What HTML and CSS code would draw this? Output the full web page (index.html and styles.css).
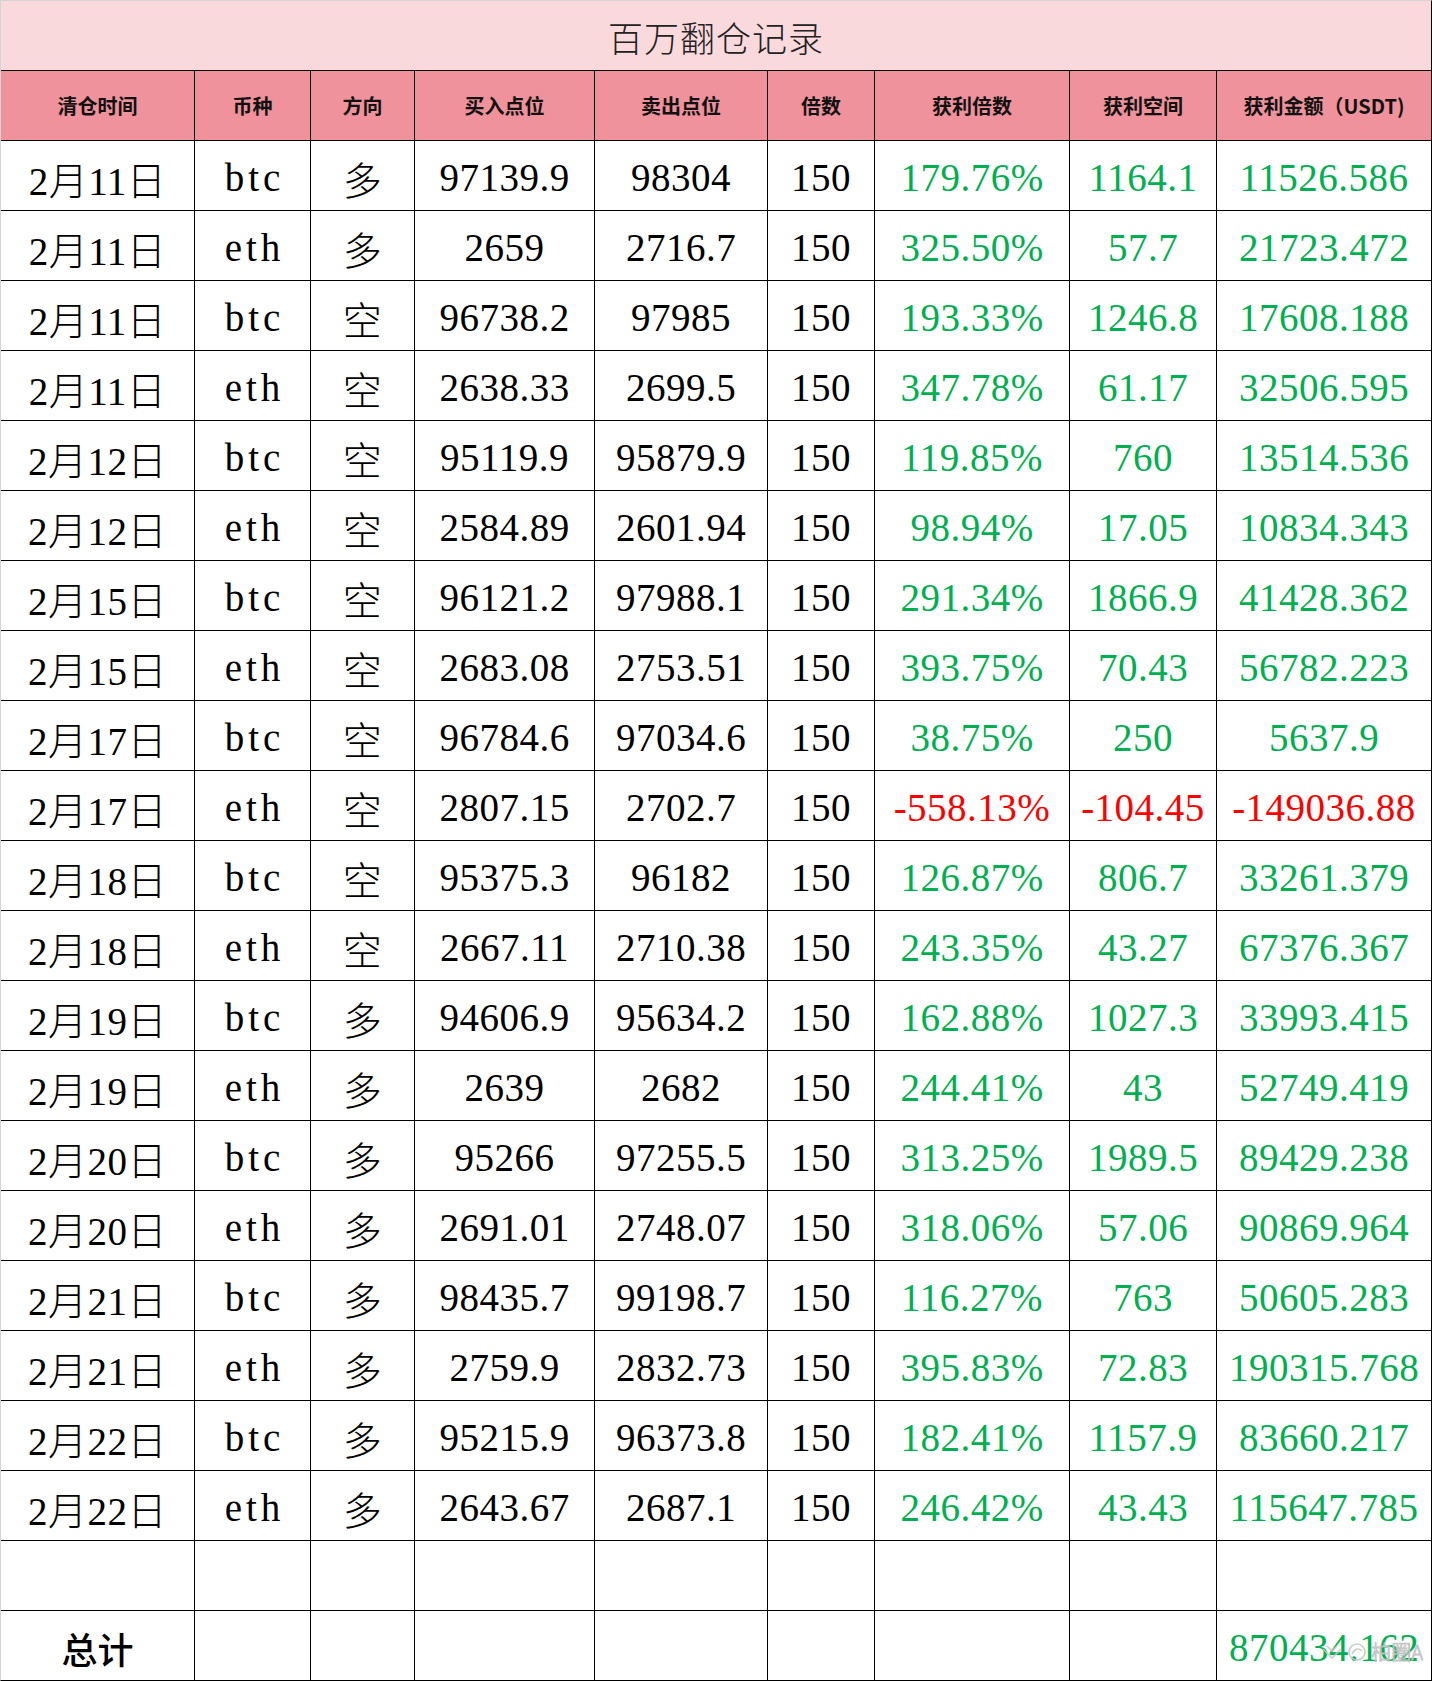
FILE: index.html
```html
<!DOCTYPE html>
<html lang="zh-CN">
<head>
<meta charset="utf-8">
<title>百万翻仓记录</title>
<link rel="stylesheet" href="styles.css">
</head>
<body>
<div class="sheet">
  <div class="title">百万翻仓记录</div>

  <div class="hd">清仓时间</div><div class="hd">币种</div><div class="hd">方向</div><div class="hd">买入点位</div><div class="hd">卖出点位</div><div class="hd">倍数</div><div class="hd">获利倍数</div><div class="hd">获利空间</div><div class="hd">获利金额（USDT)</div>

  <div class="c">2月11日</div><div class="c coin">btc</div><div class="c">多</div><div class="c">97139.9</div><div class="c">98304</div><div class="c">150</div><div class="c g">179.76%</div><div class="c g">1164.1</div><div class="c g">11526.586</div>
  <div class="c">2月11日</div><div class="c coin">eth</div><div class="c">多</div><div class="c">2659</div><div class="c">2716.7</div><div class="c">150</div><div class="c g">325.50%</div><div class="c g">57.7</div><div class="c g">21723.472</div>
  <div class="c">2月11日</div><div class="c coin">btc</div><div class="c">空</div><div class="c">96738.2</div><div class="c">97985</div><div class="c">150</div><div class="c g">193.33%</div><div class="c g">1246.8</div><div class="c g">17608.188</div>
  <div class="c">2月11日</div><div class="c coin">eth</div><div class="c">空</div><div class="c">2638.33</div><div class="c">2699.5</div><div class="c">150</div><div class="c g">347.78%</div><div class="c g">61.17</div><div class="c g">32506.595</div>
  <div class="c">2月12日</div><div class="c coin">btc</div><div class="c">空</div><div class="c">95119.9</div><div class="c">95879.9</div><div class="c">150</div><div class="c g">119.85%</div><div class="c g">760</div><div class="c g">13514.536</div>
  <div class="c">2月12日</div><div class="c coin">eth</div><div class="c">空</div><div class="c">2584.89</div><div class="c">2601.94</div><div class="c">150</div><div class="c g">98.94%</div><div class="c g">17.05</div><div class="c g">10834.343</div>
  <div class="c">2月15日</div><div class="c coin">btc</div><div class="c">空</div><div class="c">96121.2</div><div class="c">97988.1</div><div class="c">150</div><div class="c g">291.34%</div><div class="c g">1866.9</div><div class="c g">41428.362</div>
  <div class="c">2月15日</div><div class="c coin">eth</div><div class="c">空</div><div class="c">2683.08</div><div class="c">2753.51</div><div class="c">150</div><div class="c g">393.75%</div><div class="c g">70.43</div><div class="c g">56782.223</div>
  <div class="c">2月17日</div><div class="c coin">btc</div><div class="c">空</div><div class="c">96784.6</div><div class="c">97034.6</div><div class="c">150</div><div class="c g">38.75%</div><div class="c g">250</div><div class="c g">5637.9</div>
  <div class="c">2月17日</div><div class="c coin">eth</div><div class="c">空</div><div class="c">2807.15</div><div class="c">2702.7</div><div class="c">150</div><div class="c r">-558.13%</div><div class="c r">-104.45</div><div class="c r">-149036.88</div>
  <div class="c">2月18日</div><div class="c coin">btc</div><div class="c">空</div><div class="c">95375.3</div><div class="c">96182</div><div class="c">150</div><div class="c g">126.87%</div><div class="c g">806.7</div><div class="c g">33261.379</div>
  <div class="c">2月18日</div><div class="c coin">eth</div><div class="c">空</div><div class="c">2667.11</div><div class="c">2710.38</div><div class="c">150</div><div class="c g">243.35%</div><div class="c g">43.27</div><div class="c g">67376.367</div>
  <div class="c">2月19日</div><div class="c coin">btc</div><div class="c">多</div><div class="c">94606.9</div><div class="c">95634.2</div><div class="c">150</div><div class="c g">162.88%</div><div class="c g">1027.3</div><div class="c g">33993.415</div>
  <div class="c">2月19日</div><div class="c coin">eth</div><div class="c">多</div><div class="c">2639</div><div class="c">2682</div><div class="c">150</div><div class="c g">244.41%</div><div class="c g">43</div><div class="c g">52749.419</div>
  <div class="c">2月20日</div><div class="c coin">btc</div><div class="c">多</div><div class="c">95266</div><div class="c">97255.5</div><div class="c">150</div><div class="c g">313.25%</div><div class="c g">1989.5</div><div class="c g">89429.238</div>
  <div class="c">2月20日</div><div class="c coin">eth</div><div class="c">多</div><div class="c">2691.01</div><div class="c">2748.07</div><div class="c">150</div><div class="c g">318.06%</div><div class="c g">57.06</div><div class="c g">90869.964</div>
  <div class="c">2月21日</div><div class="c coin">btc</div><div class="c">多</div><div class="c">98435.7</div><div class="c">99198.7</div><div class="c">150</div><div class="c g">116.27%</div><div class="c g">763</div><div class="c g">50605.283</div>
  <div class="c">2月21日</div><div class="c coin">eth</div><div class="c">多</div><div class="c">2759.9</div><div class="c">2832.73</div><div class="c">150</div><div class="c g">395.83%</div><div class="c g">72.83</div><div class="c g">190315.768</div>
  <div class="c">2月22日</div><div class="c coin">btc</div><div class="c">多</div><div class="c">95215.9</div><div class="c">96373.8</div><div class="c">150</div><div class="c g">182.41%</div><div class="c g">1157.9</div><div class="c g">83660.217</div>
  <div class="c">2月22日</div><div class="c coin">eth</div><div class="c">多</div><div class="c">2643.67</div><div class="c">2687.1</div><div class="c">150</div><div class="c g">246.42%</div><div class="c g">43.43</div><div class="c g">115647.785</div>

  <div class="c"></div><div class="c"></div><div class="c"></div><div class="c"></div><div class="c"></div><div class="c"></div><div class="c"></div><div class="c"></div><div class="c"></div>

  <div class="c total-label">总计</div><div class="c"></div><div class="c"></div><div class="c"></div><div class="c"></div><div class="c"></div><div class="c"></div><div class="c"></div><div class="c g total-cell">870434.162
    <div class="watermark">
      <svg class="wm-icon" width="22" height="18" viewBox="0 0 22 18"><path d="M2 6 L11 15 L20 6 M6 3 L11 8 L16 3" fill="none" stroke="#c8c8c8" stroke-width="1.6"/></svg>
      <svg class="wm-icon" width="20" height="20" viewBox="0 0 20 20"><circle cx="10" cy="10" r="8" fill="none" stroke="#c8c8c8" stroke-width="1.6"/><path d="M5 12 C8 6 12 6 15 9" fill="none" stroke="#c8c8c8" stroke-width="1.6"/></svg>
      <span class="wm-text">柏圈A</span>
    </div>
  </div>
</div>
</body>
</html>
```

FILE: styles.css
```css
html, body {
  margin: 0;
  padding: 0;
  background: #ffffff;
}

.sheet {
  display: grid;
  grid-template-columns: 193px 115px 103px 179px 172px 106px 194px 146px 214px;
  grid-auto-rows: 69px;
  gap: 1px;
  width: max-content;
  background: #000000;
  border-top: 1px solid #d4d4d4;
  border-left: 1px solid #d4d4d4;
  border-right: 1px solid #000000;
  border-bottom: 1px solid #000000;
}

.title {
  grid-column: 1 / -1;
  background: #fad9dc;
  display: flex;
  align-items: center;
  justify-content: center;
  font-family: "Noto Sans CJK SC", sans-serif;
  font-weight: 300;
  font-size: 35px;
  color: #222222;
  letter-spacing: 1px;
  padding-top: 2px;
}

.hd {
  background: #ef929b;
  display: flex;
  align-items: center;
  justify-content: center;
  font-family: "Noto Sans CJK SC", sans-serif;
  font-weight: 700;
  font-size: 20px;
  color: #111111;
}

.c {
  background: #ffffff;
  display: flex;
  align-items: center;
  justify-content: center;
  font-family: "Liberation Serif", "Noto Sans CJK SC", serif;
  font-weight: 300;
  font-size: 39px;
  color: #000000;
  padding-top: 4px;
  box-sizing: border-box;
  white-space: nowrap;
  letter-spacing: 0.5px;
}

.coin {
  letter-spacing: 4px;
  padding-left: 4px;
}

.g { color: #00b050; }
.r { color: #ff0000; }

.total-label {
  font-family: "Noto Sans CJK SC", sans-serif;
  font-weight: 500;
  font-size: 36px;
  letter-spacing: 0;
}

.total-cell {
  position: relative;
}

.watermark {
  position: absolute;
  right: 8px;
  bottom: 14px;
  display: flex;
  align-items: center;
  gap: 4px;
  opacity: 0.9;
}

.wm-text {
  font-family: "Noto Sans CJK SC", sans-serif;
  font-size: 20px;
  letter-spacing: 0;
  color: transparent;
  -webkit-text-stroke: 1px #c0c0c0;
}
```
